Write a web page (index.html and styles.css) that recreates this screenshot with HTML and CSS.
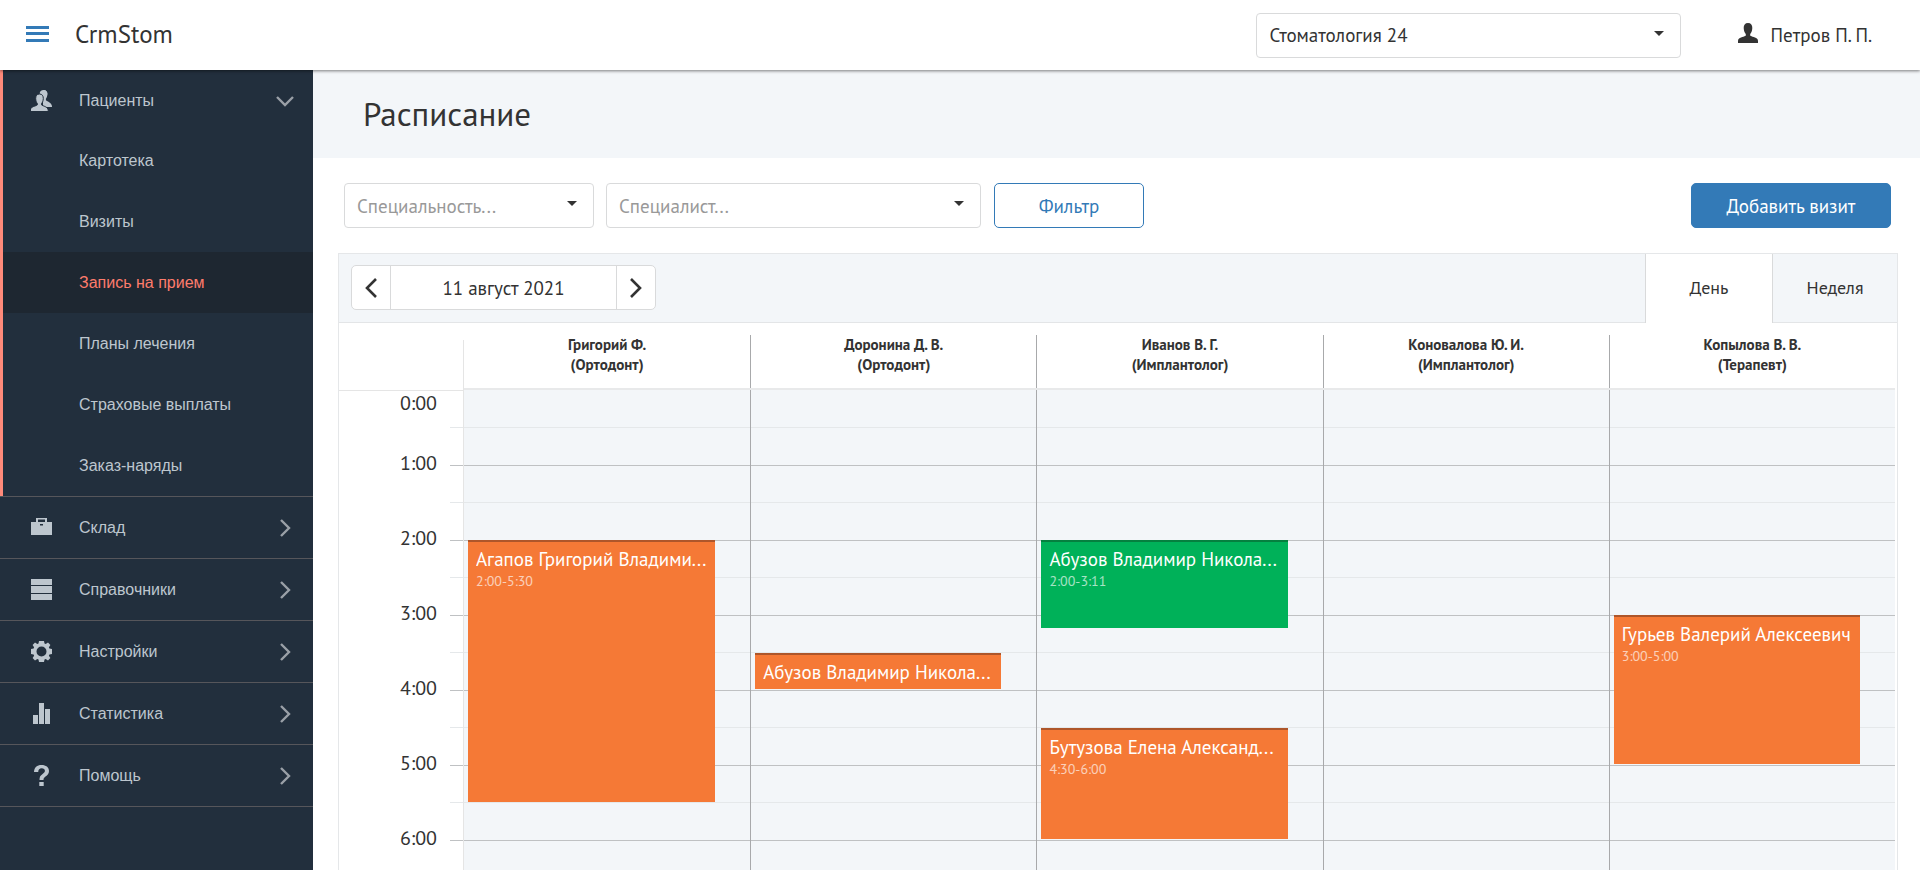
FILE: index.html
```html
<!DOCTYPE html>
<html lang="ru">
<head>
<meta charset="utf-8">
<title>CrmStom</title>
<link rel="stylesheet" href="styles.css">
</head>
<body>
<header class="topbar">
  <button class="menu-button" type="button" aria-label="Меню">
    <svg width="23" height="16" viewBox="0 0 23 16"><path d="M0 0h23v3H0zM0 6h23v3H0zM0 13h23v3H0z"/></svg>
  </button>
  <a class="brand" href="#">CrmStom</a>
  <div class="select clinic">
    <select class="control" aria-label="Клиника"><option>Стоматология 24</option></select>
  </div>
  <a class="user" href="#">
    <svg width="20" height="20" viewBox="0 0 20 20"><path d="M10 0c3 0 4.400 2.100 4.300 5C14.200 8 13.200 10 12.200 11v1.600c.5.800 2 1 3.500 1.500C18.500 15 20 15.800 20 18v2H0v-2c0-2.200 1.500-3 4.300-3.900 1.500-.5 3-.7 3.500-1.500V11C6.800 10 5.800 8 5.700 5 5.600 2.100 7 0 10 0z"/></svg>
    <span>Петров П. П.</span>
  </a>
</header>
<div class="layout">
  <nav class="sidebar">
    <div class="group">
      <a class="item head" href="#">
        <svg class="icon" viewBox="0 0 21 21"><path d="M12.500 0c2.600 0 4 1.800 3.900 4.200-.1 2.300-.8 3.700-1.500 4.500v1.500c1.500 1.400 6.100 2.500 6.100 6.300V17H12V2z"/><path d="M12.500 0C10.300 0 8.800 1.400 8.600 3.500L13 8l3.400-3.800C16.500 1.800 15.100 0 12.500 0z"/><path class="front" d="M8.500 4c2.600 0 3.900 1.900 3.800 4.600-.1 2.400-.9 4-1.700 4.800v1.500c1.100 1.200 6.600 1.600 6.600 5.600V22H-1v-1.500c0-4 6.200-4.400 7.300-5.600v-1.500c-.8-.8-1.500-2.400-1.600-4.800C4.600 5.900 5.900 4 8.500 4z"/></svg>
        <span>Пациенты</span>
        <svg class="chevron" viewBox="0 0 18 18"><path d="M1 5l8 8 8-8"/></svg>
      </a>
      <a class="item sub" href="#">Картотека</a>
      <a class="item sub" href="#">Визиты</a>
      <a class="item sub current" href="#">Запись на прием</a>
      <a class="item sub" href="#">Планы лечения</a>
      <a class="item sub" href="#">Страховые выплаты</a>
      <a class="item sub" href="#">Заказ-наряды</a>
    </div>
    <a class="item section" href="#">
      <svg class="icon" viewBox="0 0 21 21"><path fill-rule="evenodd" d="M5 1h11v4h5v13H0V5h5zM7 2.500V5h7V2.500zM9 7v1.500h3V7z"/></svg>
      <span>Склад</span>
      <svg class="chevron" viewBox="0 0 18 18"><path d="M5 1l8 8-8 8"/></svg>
    </a>
    <a class="item section" href="#">
      <svg class="icon" viewBox="0 0 21 21"><path d="M0 0h21v6H0zM0 7h21v7H0zM0 15h21v6H0z"/></svg>
      <span>Справочники</span>
      <svg class="chevron" viewBox="0 0 18 18"><path d="M5 1l8 8-8 8"/></svg>
    </a>
    <a class="item section" href="#">
      <svg class="icon" viewBox="0 0 21 21"><path fill-rule="evenodd" d="M8 0h5l.5 2.600 1.200.5L17 1.600 19.400 4l-1.500 2.300.5 1.200L21 8v5l-2.600.5-.5 1.200 1.500 2.300-2.400 2.400-2.300-1.500-1.200.5L13 21H8l-.5-2.600-1.200-.5L4 19.400 1.600 17l1.500-2.300-.5-1.200L0 13V8l2.600-.5.5-1.200L1.600 4 4 1.600l2.300 1.500 1.200-.5zM10.500 5.500a5 5 0 1 0 0 10 5 5 0 0 0 0-10z"/></svg>
      <span>Настройки</span>
      <svg class="chevron" viewBox="0 0 18 18"><path d="M5 1l8 8-8 8"/></svg>
    </a>
    <a class="item section" href="#">
      <svg class="icon" viewBox="0 0 21 21"><path d="M2 12h5v9H2zM8 0h5v21H8zM14 6h5v15h-5z"/></svg>
      <span>Статистика</span>
      <svg class="chevron" viewBox="0 0 18 18"><path d="M5 1l8 8-8 8"/></svg>
    </a>
    <a class="item section" href="#">
      <svg class="icon" viewBox="0 0 21 21"><path d="M3 7C3.200 2.500 6 0 10.500 0 15 0 18 2.200 18 6c0 2.700-1.500 4.200-3.500 5.500C12.700 12.800 12.500 13.500 12.500 15h-4c0-2.900.6-4.300 2.800-5.800C13 8 13.900 7.300 13.900 5.800c0-1.600-1.200-2.500-3.200-2.500C8.500 3.300 7.400 4.500 7.200 7zM8.300 17h4.400v4H8.300z"/></svg>
      <span>Помощь</span>
      <svg class="chevron" viewBox="0 0 18 18"><path d="M5 1l8 8-8 8"/></svg>
    </a>
  </nav>
  <main class="main">
    <div class="page-head"><h1 class="title">Расписание</h1></div>
    <form class="filters">
      <div class="select specialty">
        <select class="control placeholder" aria-label="Специальность"><option>Специальность...</option></select>
      </div>
      <div class="select specialist">
        <select class="control placeholder" aria-label="Специалист"><option>Специалист...</option></select>
      </div>
      <button class="button outline" type="button">Фильтр</button>
      <button class="button primary" type="button">Добавить визит</button>
    </form>
    <section class="calendar">
      <div class="toolbar">
        <div class="date-nav">
          <button class="step" type="button" aria-label="Назад"><svg width="12" height="20" viewBox="0 0 12 20"><path d="M11 1l-9 9 9 9"/></svg></button>
          <button class="date" type="button">11 август 2021</button>
          <button class="step" type="button" aria-label="Вперёд"><svg width="12" height="20" viewBox="0 0 12 20"><path d="M1 1l9 9-9 9"/></svg></button>
        </div>
        <div class="tabs">
          <button class="tab active" type="button">День</button>
          <button class="tab" type="button">Неделя</button>
        </div>
      </div>
      <div class="schedule">
        <div class="axis">
          <div class="axis-head"></div>
          <ol class="hours">
            <li class="hour">0:00</li><li class="hour">1:00</li><li class="hour">2:00</li><li class="hour">3:00</li><li class="hour">4:00</li><li class="hour">5:00</li><li class="hour">6:00</li>
          </ol>
        </div>
        <div class="column">
          <h2 class="doctor"><span class="doctor-name">Григорий Ф.<br>(Ортодонт)</span></h2>
          <div class="slots">
            <article class="event" style="--start:120;--end:330"><h3 class="patient">Агапов Григорий Владими...</h3><p class="time">2:00-5:30</p></article>
          </div>
        </div>
        <div class="column">
          <h2 class="doctor"><span class="doctor-name">Доронина Д. В.<br>(Ортодонт)</span></h2>
          <div class="slots">
            <article class="event" style="--start:210;--end:240"><h3 class="patient">Абузов Владимир Никола...</h3></article>
          </div>
        </div>
        <div class="column">
          <h2 class="doctor"><span class="doctor-name">Иванов В. Г.<br>(Имплантолог)</span></h2>
          <div class="slots">
            <article class="event done" style="--start:120;--end:191"><h3 class="patient">Абузов Владимир Никола...</h3><p class="time">2:00-3:11</p></article>
            <article class="event" style="--start:270;--end:360"><h3 class="patient">Бутузова Елена Александ...</h3><p class="time">4:30-6:00</p></article>
          </div>
        </div>
        <div class="column">
          <h2 class="doctor"><span class="doctor-name">Коновалова Ю. И.<br>(Имплантолог)</span></h2>
          <div class="slots"></div>
        </div>
        <div class="column">
          <h2 class="doctor"><span class="doctor-name">Копылова В. В.<br>(Терапевт)</span></h2>
          <div class="slots">
            <article class="event" style="--start:180;--end:300"><h3 class="patient">Гурьев Валерий Алексеевич</h3><p class="time">3:00-5:00</p></article>
          </div>
        </div>
      </div>
    </section>
  </main>
</div>
</body>
</html>
```
FILE: styles.css
```css
* { box-sizing: border-box; }

body {
  margin: 0;
  height: 100vh;
  display: flex;
  flex-direction: column;
  overflow: hidden;
  background: #fff;
  color: #333;
  font-family: "PT Sans", "Noto Sans", sans-serif;
  font-size: 19px;
}

a { color: inherit; text-decoration: none; }
h1, h2, h3, p, ol { margin: 0; padding: 0; font-weight: 400; }
button, select { font: inherit; color: inherit; cursor: pointer; }

/* Top bar */
.topbar {
  position: relative;
  z-index: 1;
  flex: none;
  display: flex;
  align-items: center;
  height: 70px;
  padding: 0 48px 0 26px;
  background: #fff;
  box-shadow: 0 1px 3px rgba(0, 0, 0, .5);
}
.menu-button { display: flex; padding: 0 0 2px; border: 0; background: none; fill: #337ab7; }
.brand { margin-left: 26px; padding-bottom: 2px; font-size: 25px; }
.clinic { width: 425px; margin-left: auto; }
.user { display: flex; align-items: center; gap: 12px; margin-left: 57px; fill: #333; }
.user svg { margin-bottom: 4px; }

/* Controls */
.select { position: relative; }
.select::after {
  content: "";
  position: absolute;
  top: 18px;
  right: 17px;
  border: 5px solid transparent;
  border-top-color: #333;
  border-bottom: 0;
  pointer-events: none;
}
.control {
  appearance: none;
  display: block;
  width: 100%;
  height: 45px;
  padding: 0 40px 0 12px;
  border: 1px solid #d9dadb;
  border-radius: 4px;
  background: #fff;
}
.placeholder { color: #999; }
.button { height: 45px; border: 1px solid #337ab7; border-radius: 5px; }
.outline { width: 150px; margin-left: 1px; background: #fff; color: #337ab7; }
.primary { width: 200px; margin-left: auto; background: #337ab7; color: #fff; }

/* Layout */
.layout { flex: 1; display: flex; min-height: 0; }
.sidebar {
  flex: none;
  width: 313px;
  background: #222f3d;
  color: #bdc6ce;
  font-family: Arial, "Liberation Sans", sans-serif;
  font-size: 16px;
}
.group { border-bottom: 1px solid #56565b; box-shadow: inset 3px 0 #ff8a7a; }
.item { display: flex; align-items: center; height: 61px; padding: 1px 19px 0 31px; }
.head { height: 60px; }
.sub { padding-left: 79px; }
.current { margin-left: 3px; padding-left: 76px; background: #1e2731; color: #ff7c6c; }
.section { height: 62px; padding-top: 0; border-bottom: 1px solid #56565b; }
.icon { width: 21px; height: 21px; margin-right: 27px; fill: #bdc6ce; }
.front { stroke: #222f3d; stroke-width: 1; }
.chevron { width: 18px; height: 18px; margin-left: auto; fill: none; stroke: #9aa0a7; stroke-width: 2.4; }

.main { flex: 1; min-width: 0; display: flex; flex-direction: column; }
.page-head { flex: none; display: flex; align-items: center; height: 88px; padding-left: 50px; background: #f3f6f9; }
.title { font-size: 33px; line-height: 40px; }
.filters { flex: none; display: flex; gap: 12px; padding: 25px 29px 25px 31px; }
.specialty { width: 250px; }
.specialist { width: 375px; }

/* Calendar */
.calendar {
  flex: 1;
  min-height: 0;
  display: flex;
  flex-direction: column;
  margin: 0 22px 0 25px;
  border: 1px solid #e5e7e9;
  border-bottom: 0;
}
.toolbar {
  flex: none;
  display: flex;
  align-items: flex-start;
  justify-content: space-between;
  height: 69px;
  padding-left: 12px;
  background: #f3f6f9;
  box-shadow: inset 0 -1px #e3e5e7;
}
.date-nav {
  display: flex;
  height: 45px;
  margin-top: 11px;
  border: 1px solid #d9dadb;
  border-radius: 5px;
  background: #fff;
}
.date-nav button { border: 0; background: none; padding: 0; }
.step { width: 38px; display: flex; align-items: center; justify-content: center; }
.step svg { fill: none; stroke: #333; stroke-width: 2.6; }
.date-nav .date { width: 227px; border: 1px solid #d9dadb; border-width: 0 1px; }
.tabs { display: flex; height: 100%; }
.tab { width: 125px; padding: 0 0 2px; border: 0; border-left: 1px solid #d9dadb; background: none; font-size: 18px; }
.tab.active { width: 127px; background: #fff; }

.schedule {
  flex: 1;
  min-height: 0;
  display: grid;
  grid-template-columns: 125px repeat(5, 1fr);
  padding-right: 2px;
  overflow: hidden;
}
.axis { margin-top: 17px; border-right: 1px solid #e5e5e5; }
.axis-head { height: 51px; border-bottom: 1px solid #e5e5e5; }
.hours {
  list-style: none;
  font-size: 20px;
  text-align: right;
  background:
    linear-gradient(transparent 36px, #e5e8ea 36px 37px, transparent 37px 74px, #bfc1c3 74px) right top / 13px 75px repeat-y;
}
.hour { height: 75px; padding-right: 26px; line-height: 75px; }
.hour:first-child { height: 35px; line-height: 24px; }
.hour:last-child { height: 91px; }

.column { display: flex; flex-direction: column; min-width: 0; padding-top: 12px; }
.doctor { height: 55px; border-bottom: 2px solid #e8e9ea; font-size: 15px; font-weight: 700; line-height: 20px; text-align: center; }
.doctor-name { display: block; height: 53px; border-left: 1px solid #a8a9ab; }
.slots {
  position: relative;
  flex: 1;
  border-left: 1px solid #a8a9ab;
  background:
    linear-gradient(transparent 36px, #e5e8ea 36px 37px, transparent 37px 74px, #bfc1c3 74px) 0 1px / 100% 75px,
    #f3f6f9;
}
.slots::before { content: ""; display: block; height: 1px; background: #f3f6f9; }
.axis + .column .doctor-name, .axis + .column .slots { border-left: 0; }

/* Events are laid over the hour lines; 60 minutes take 75px */
.event {
  position: absolute;
  top: calc(var(--start) * 75px / 60);
  left: 4px;
  right: 35px;
  height: calc((var(--end) - var(--start)) * 75px / 60 - 1px);
  padding: 5px 8px 0;
  border-top: 2px solid #ae562a;
  background: #f57936;
  color: #fff;
  overflow: hidden;
}
.done { border-top-color: #05803f; background: #00b159; }
.patient { font-size: 19px; line-height: 24px; white-space: nowrap; overflow: hidden; text-overflow: ellipsis; }
.time { font-size: 14px; line-height: 20px; opacity: .65; }
```
